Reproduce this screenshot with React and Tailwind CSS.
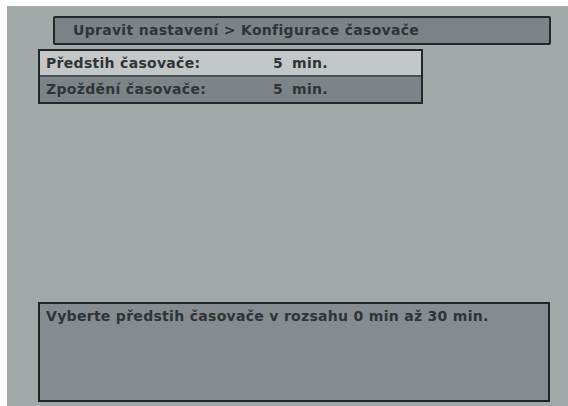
export default function App() {
  const font = { fontFamily: '"DejaVu Sans", "Liberation Sans", sans-serif' }

  return (
    <div className="w-[568px] h-[406px] bg-white pt-[6px] pl-[7px] flex" style={font}>
      <div className="flex-1 flex flex-col bg-[#a3a8a9] text-[14px] tracking-[0.3px] font-bold text-[#2f3436]">
        {/* header */}
        <div className="ml-[46px] mt-[10px] w-[498px] h-[29px] flex items-center pl-[18px] bg-[#7b8386] border-2 border-[#22272a] rounded-[2px]">
          Upravit nastavení &gt; Konfigurace časovače
        </div>

        {/* settings table */}
        <div className="ml-[31px] mt-[4px] w-[385px] flex flex-col border-2 border-[#22272a]">
          <div className="h-[26px] flex items-center pl-[6px] bg-[#c3c7c8] border-b-2 border-[#4a5153]">
            <span className="w-[227px]">Předstih časovače:</span>
            <span className="w-[19px]">5</span>
            <span>min.</span>
          </div>
          <div className="h-[25px] flex items-center pl-[6px] bg-[#7d8487]">
            <span className="w-[227px]">Zpoždění časovače:</span>
            <span className="w-[19px]">5</span>
            <span>min.</span>
          </div>
        </div>

        {/* help text */}
        <div className="ml-[31px] mt-auto mb-[4px] w-[512px] h-[100px] bg-[#858b8e] border-2 border-[#1f2426] px-[6px] pt-[2px]">
          Vyberte předstih časovače v rozsahu 0 min až 30 min.
        </div>
      </div>
    </div>
  )
}
